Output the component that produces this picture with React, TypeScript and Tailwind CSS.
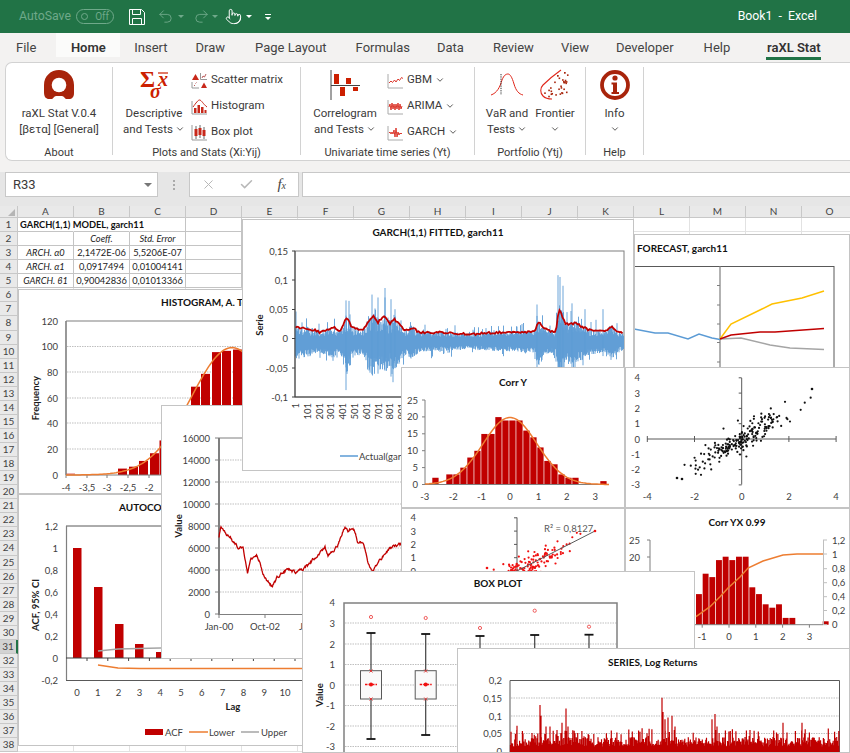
import { ChevronDown, Pointer, Redo2, Undo2, Check, X } from "lucide-react";
import type { ReactNode } from "react";

// seeded so the noisy chart data stays the same on every load
function makeRng(seed: number) {
  let a = seed;
  return () => {
    a = (a + 0x6d2b79f5) | 0;
    let t = Math.imul(a ^ (a >>> 15), 1 | a);
    t = (t + Math.imul(t ^ (t >>> 7), 61 | t)) ^ t;
    return ((t ^ (t >>> 14)) >>> 0) / 4294967296;
  };
}

function gauss(r: () => number) {
  return Math.sqrt(-2 * Math.log(r() + 1e-9)) * Math.cos(2 * Math.PI * r());
}

function interp(knots: number[][], x: number) {
  for (let i = 1; i < knots.length; i++) {
    if (x <= knots[i][0]) {
      const [x0, y0] = knots[i - 1];
      const [x1, y1] = knots[i];
      return y0 + ((y1 - y0) * (x - x0)) / (x1 - x0);
    }
  }
  return knots[knots.length - 1][1];
}

const pts = (list: number[][]) => list.map((p) => p.join(",")).join(" ");

const volKnots = [
  [295, 0.02], [300, 0.018], [310, 0.016], [320, 0.011], [333, 0.02], [340, 0.011], [347, 0.037], [352, 0.018],
  [362, 0.013], [373, 0.04], [378, 0.028], [385, 0.038], [390, 0.025], [394, 0.034], [405, 0.014], [412, 0.019],
  [420, 0.01], [440, 0.01], [470, 0.007], [490, 0.01], [510, 0.01], [535, 0.012], [538, 0.03], [543, 0.018],
  [550, 0.012], [556, 0.012], [559, 0.05], [566, 0.024], [575, 0.026], [590, 0.014], [605, 0.011], [611, 0.02],
  [620, 0.01], [624, 0.007],
];

function garchPaths() {
  const r = makeRng(11);
  const zero = 338.5;
  const scale = 586;
  let blue = "";
  const red: number[][] = [];
  for (let x = 295.5; x < 624; x += 0.5) {
    const v = interp(volKnots, x);
    const up = v * (0.3 + r() * 0.9) + (r() > 0.9 ? v * r() * 1.6 : 0);
    const down = 0.007 + v * (0.7 + r() * 0.8) + (r() > 0.88 ? v * r() * 1.3 : 0);
    blue += `M${x} ${(zero - up * scale).toFixed(1)}V${(zero + down * scale).toFixed(1)}`;
    if (x % 1.5 === 0) red.push([x, +(zero - v * scale + (r() - 0.5) * 2.4).toFixed(1)]);
  }
  const spikes = [
    [296, 0.046, -0.02], [346, 0.065, -0.088], [372, 0.075, -0.06], [378, 0.07, -0.06], [385, 0.07, -0.055], [391, 0.067, -0.065],
    [395, 0.05, -0.05], [537, 0.058, -0.06], [558, 0.108, -0.06], [560, 0.105, -0.06], [563, 0.09, -0.05], [572, 0.06, -0.05],
    [585, 0.05, -0.03], [603, 0.05, -0.03],
  ];
  for (const [x, a, b] of spikes) blue += `M${x} ${zero - a * scale}V${zero - b * scale}`;
  return { blue, red: pts(red) };
}

function valuePath() {
  const r = makeRng(3);
  const knots = [
    [219, 537], [221, 527], [224, 532], [230, 537], [238, 548], [243, 547], [247.5, 572], [250, 560], [257, 555], [263, 572],
    [267, 580], [272, 587], [277, 578], [287, 569], [297, 573], [307, 566], [313, 560], [325, 547], [328, 555], [337, 547],
    [345, 526], [348, 532], [353, 526], [358, 543], [363, 543], [368, 563], [373, 570], [380, 560], [390, 548], [400, 545], [410, 540],
  ];
  const out: number[][] = [];
  let drift = 0;
  for (let x = 219; x < 410; x += 0.5) {
    drift = drift * 0.6 + (r() - 0.5) * 2.4;
    out.push([+x.toFixed(1), +(interp(knots, x) + drift).toFixed(1)]);
  }
  return pts(out);
}

function scatter(seed: number, ox: number, oy: number, ux: number, uy: number) {
  const r = makeRng(seed);
  const out: number[][] = [];
  for (let i = 0; i < 210; i++) {
    const x = gauss(r) * 0.95 + 0.05;
    const y = 0.9 * x + gauss(r) * 0.42;
    out.push([ox + x * ux, oy - y * uy]);
  }
  return out;
}

function logReturnsPath() {
  const r = makeRng(29);
  const zero = 751.5;
  const scale = 358;
  let d = "";
  for (let x = 510.5; x < 839; x += 0.7) {
    const v = r() > 0.85 ? 0.035 + r() * 0.03 : 0.014 + r() * 0.026;
    d += `M${x.toFixed(1)} ${zero + 3}V${(zero - v * scale).toFixed(1)}`;
  }
  const spikes = [
    [511, 0.055], [517, 0.072], [523, 0.05], [532, 0.052], [540, 0.13], [541, 0.1], [546, 0.07], [550, 0.07], [557, 0.06], [562, 0.08],
    [566, 0.12], [568, 0.07], [575, 0.05], [662, 0.15], [663, 0.11], [665, 0.09], [668, 0.095], [672, 0.1], [675, 0.07], [712, 0.09],
    [715, 0.105], [717, 0.07], [783, 0.08], [802, 0.08], [750, 0.06], [640, 0.055],
  ];
  for (const [x, v] of spikes) d += `M${x} ${zero + 3}V${zero - v * scale}`;
  return d;
}

const garch = garchPaths();
const valueLine = valuePath();
const blackDots = scatter(7, 741.7, 439, 23.6, 15.3);
const redDots = scatter(19, 517, 571, 26, 13.3);
const logReturns = logReturnsPath();
const frontierDots = (() => {
  const r = makeRng(5);
  const out: number[][] = [];
  for (let i = 0; i < 42; i++) {
    const x = 545 + r() * 24;
    const y = 74 + r() * 25;
    if (y > 96 - (x - 545) * 0.05 || y < 92 - (x - 545) * 1.1) continue;
    out.push([x, y]);
  }
  return out;
})();

function normal(cx: number, sigma: number, zero: number, peak: number, from: number, to: number) {
  const out: number[][] = [];
  for (let x = from; x <= to; x += 2) {
    out.push([x, +(zero - peak * Math.exp(-((x - cx) ** 2) / (2 * sigma * sigma))).toFixed(1)]);
  }
  return pts(out);
}

function T({ x, y, a = "middle", b, children, rot }: { x: number; y: number; a?: "start" | "middle" | "end"; b?: boolean; rot?: boolean; children: ReactNode }) {
  return (
    <text
      x={x}
      y={y}
      textAnchor={a}
      transform={rot ? `rotate(-90 ${x} ${y})` : undefined}
      className={b ? "fill-[#1c1c1c] text-[9.5px] font-bold" : "fill-[#404040] text-[9.5px]"}
    >
      {children}
    </text>
  );
}

function Title({ x, y, a, children }: { x: number; y: number; a?: "start" | "middle"; children: ReactNode }) {
  return (
    <text x={x} y={y} textAnchor={a ?? "middle"} className="fill-[#111] text-[10px] font-bold">
      {children}
    </text>
  );
}

function Dash({ x1, x2, y }: { x1: number; x2: number; y: number }) {
  return <line x1={x1} x2={x2} y1={y} y2={y} stroke="#bfbfbf" strokeWidth="1" strokeDasharray="1.5 1" />;
}

function Chart({ x, y, w, h, className, children }: { x: number; y: number; w: number; h: number; className: string; children: ReactNode }) {
  return (
    <div className={`absolute overflow-hidden bg-white outline-1 -outline-offset-1 outline-[#c4c4c4] ${className}`}>
      <svg width={w} height={h} viewBox={`${x} ${y} ${w} ${h}`} className="block font-['Lato',sans-serif]">
        {children}
      </svg>
    </div>
  );
}

function HistogramChart() {
  const bars = [
    [66, 1.3], [118, 5], [129, 6.5], [139, 11], [150, 17], [159.5, 27], [170, 34], [181, 50], [191, 69], [201, 79], [212, 96], [222, 97], [233, 98],
  ];
  const ys = [[120, 321], [100, 346.5], [80, 372], [60, 398], [40, 423], [20, 449], [0, 475]];
  const xs = [[66, "-4"], [87, "-3,5"], [107, "-3"], [128, "-2,5"], [149, "-2"]];
  return (
    <Chart x={18} y={289} w={402} h={205} className="left-[18px] top-[83px] w-[402px] h-[205px]">
      <Title x={161} y={306} a="start">HISTOGRAM, A. Test</Title>
      {ys.slice(1, 6).map(([, y]) => <Dash key={y} x1={67} x2={420} y={y} />)}
      <line x1={66} x2={420} y1={321} y2={321} stroke="#7f7f7f" strokeWidth="1.2" />
      {bars.map(([x, v]) => (
        <rect key={x} x={x} y={475 - v * 1.28} width={9} height={v * 1.28} fill={x === 66 ? "#e98a8a" : "#c00000"} />
      ))}
      <line x1={66} x2={66} y1={321} y2={475} stroke="#7f7f7f" strokeWidth="1.6" />
      <line x1={66} x2={420} y1={475} y2={475} stroke="#7f7f7f" />
      {xs.map(([x]) => <line key={x} x1={x} x2={x} y1={475} y2={478} stroke="#7f7f7f" />)}
      <polyline points={normal(232, 41, 475, 99.5 * 1.28, 66, 250)} fill="none" stroke="#ed7d31" strokeWidth="1.5" />
      {ys.map(([v, y]) => <T key={v} x={58} y={y + 3.5} a="end">{v}</T>)}
      {xs.map(([x, l]) => <T key={x} x={x as number} y={491}>{l}</T>)}
      <T x={39} y={398} b rot>Frequency</T>
    </Chart>
  );
}

function AcfChart() {
  const labels = [0, 1, 2, 3, 4, 5, 6, 7, 8, 9, 10];
  const ys = [["1,2", 526], ["1", 548], ["0,8", 570], ["0,6", 592], ["0,4", 614], ["0,2", 636], ["0", 658], ["-0,2", 680]];
  const bars = [[73, 548], [94, 587], [115, 624], [135, 644], [156, 652]];
  return (
    <Chart x={18} y={494} w={402} h={252} className="left-[18px] top-[288px] w-[402px] h-[252px]">
      <Title x={119} y={511} a="start">AUTOCORRELOGRAM</Title>
      <line x1={66} x2={420} y1={526} y2={526} stroke="#595959" />
      <line x1={66} x2={420} y1={680.5} y2={680.5} stroke="#595959" />
      {bars.map(([x, y]) => <rect key={x} x={x} y={y} width={8.5} height={658 - y} fill="#c00000" />)}
      <line x1={66.5} x2={66.5} y1={526} y2={680} stroke="#7f7f7f" strokeWidth="1.2" />
      <line x1={66} x2={420} y1={658} y2={658} stroke="#404040" />
      {labels.map((l) => <line key={l} x1={87 + l * 20.8} x2={87 + l * 20.8} y1={658} y2={661} stroke="#404040" />)}
      <polyline points="98,651 118,649 160,648 300,648" fill="none" stroke="#a5a5a5" strokeWidth="1.5" />
      <polyline points="98,665 118,668 140,668.5 310,668.5" fill="none" stroke="#ed7d31" strokeWidth="1.5" />
      {ys.map(([l, y]) => <T key={l} x={58} y={(y as number) + 3.5} a="end">{l}</T>)}
      {labels.map((l) => <T key={l} x={77 + l * 20.8} y={696}>{l}</T>)}
      <T x={233} y={710} b>Lag</T>
      <T x={39} y={605} b rot>ACF, 95% CI</T>
      <rect x={145} y={729} width={18} height={6} fill="#c00000" />
      <T x={165} y={736} a="start">ACF</T>
      <line x1={189} x2={208} y1={732} y2={732} stroke="#ed7d31" strokeWidth="1.5" />
      <T x={209} y={736} a="start">Lower</T>
      <line x1={241} x2={259} y1={732} y2={732} stroke="#a5a5a5" strokeWidth="1.5" />
      <T x={261} y={736} a="start">Upper</T>
    </Chart>
  );
}

function ValueChart() {
  const ys = [[16000, 438], [14000, 460], [12000, 482], [10000, 504], [8000, 526], [6000, 548], [4000, 570], [2000, 592], [0, 614]];
  return (
    <Chart x={161} y={405} w={300} h={254} className="left-[161px] top-[199px] w-[300px] h-[254px]">
      <line x1={219} x2={461} y1={438} y2={438} stroke="#7f7f7f" />
      {ys.slice(1, 8).map(([, y]) => <Dash key={y} x1={220} x2={461} y={y} />)}
      <line x1={219} x2={219} y1={438} y2={615} stroke="#7f7f7f" strokeWidth="2" />
      <line x1={219} x2={461} y1={614.5} y2={614.5} stroke="#7f7f7f" />
      {ys.map(([, y]) => <line key={y} x1={215} x2={219} y1={y} y2={y} stroke="#7f7f7f" />)}
      {[219, 265, 312].map((x) => <line key={x} x1={x} x2={x} y1={614} y2={618} stroke="#7f7f7f" />)}
      <polyline points={valueLine} fill="none" stroke="#c00000" strokeWidth="1.3" />
      {ys.map(([v, y]) => <T key={v} x={210} y={y + 3.5} a="end">{v}</T>)}
      <T x={219} y={630}>Jan-00</T>
      <T x={265} y={630}>Oct-02</T>
      <T x={312} y={630}>Jul-05</T>
      <T x={182} y={526} b rot>Value</T>
    </Chart>
  );
}

function GarchChart() {
  const ys = [["0,15", 251], ["0,1", 280], ["0,05", 309.5], ["0", 338.5], ["-0,05", 368], ["-0,1", 397]];
  const xs = ["1", "101", "201", "301", "401", "501", "601", "701", "801", "901"];
  return (
    <Chart x={242} y={219} w={392} h={252} className="left-[242px] top-[13px] w-[392px] h-[252px]">
      <Title x={438} y={236}>GARCH(1,1) FITTED, garch11</Title>
      <rect x={295} y={251} width={329} height={146} fill="none" stroke="#7f7f7f" strokeWidth="1" />
      <path d={garch.blue} stroke="#5b9bd5" strokeWidth="0.9" fill="none" />
      <polyline points={garch.red} fill="none" stroke="#c00000" strokeWidth="1.8" />
      <line x1={295} x2={295} y1={251} y2={397} stroke="#404040" />
      <line x1={295} x2={624} y1={397} y2={397} stroke="#404040" />
      {ys.map(([l, y]) => (
        <g key={l}>
          <line x1={292} x2={295} y1={y} y2={y} stroke="#404040" />
          <T x={288} y={(y as number) + 3.5} a="end">{l}</T>
        </g>
      ))}
      {xs.map((l, i) => {
        const x = 295.5 + i * 11.8;
        return (
          <text key={l} x={x + 3.5} y={403} textAnchor="end" transform={`rotate(-90 ${x + 3.5} 403)`} className="fill-[#404040] text-[9.5px]">
            {l}
          </text>
        );
      })}
      <T x={263} y={325} b rot>Serie</T>
      <line x1={340} x2={358} y1={456} y2={456} stroke="#5b9bd5" strokeWidth="1.5" />
      <T x={359} y={459.5} a="start">Actual(garch11)</T>
    </Chart>
  );
}

function ForecastChart() {
  return (
    <Chart x={634} y={234} w={216} h={134} className="left-[634px] top-[28px] w-[216px] h-[134px]">
      <Title x={637} y={251.5} a="start">FORECAST, garch11</Title>
      <line x1={634} x2={834} y1={266.5} y2={266.5} stroke="#595959" />
      <line x1={834} x2={834} y1={266} y2={368} stroke="#595959" />
      <line x1={634.5} x2={634.5} y1={266} y2={368} stroke="#7f7f7f" />
      <line x1={720} x2={720} y1={266} y2={368} stroke="#7f7f7f" strokeWidth="1.2" />
      {[285.5, 305, 324, 342.5, 362].map((y) => <line key={y} x1={717} x2={720} y1={y} y2={y} stroke="#7f7f7f" />)}
      <polyline points="634,329 655,333 668,333 688,339 699,334 712,338 720,339.5" fill="none" stroke="#5b9bd5" strokeWidth="1.5" />
      <polyline points="720,339 741,338 770,345 790,348 824,349.5" fill="none" stroke="#a5a5a5" strokeWidth="1.5" />
      <polyline points="720,339 731,324 762,309 772,304 802,298 824,291" fill="none" stroke="#ffc000" strokeWidth="1.5" />
      <polyline points="720,339 731,335 760,332 775,332 824,328.5" fill="none" stroke="#c00000" strokeWidth="1.5" />
    </Chart>
  );
}

function CorrYChart() {
  const counts = [2, 0, 3, 3, 5, 8, 10, 15, 15, 20, 19, 19, 19, 16, 14, 11, 7, 6, 3, 2, 2, 0, 0, 0, 1];
  const ys = [25, 20, 15, 10, 5, 0];
  const xs = [-3, -2, -1, 0, 1, 2, 3];
  return (
    <Chart x={401} y={367} w={224} h={141} className="left-[401px] top-[161px] w-[224px] h-[141px]">
      <Title x={513} y={385.5}>Corr Y</Title>
      {counts.map((c, i) => c > 0 && (
        <rect key={i} x={432.3 + i * 7} y={484.5 - c * 3.37} width={6.3} height={c * 3.37} fill="#c00000" />
      ))}
      <line x1={425} x2={425} y1={400} y2={485} stroke="#7f7f7f" />
      <line x1={425} x2={609} y1={484.5} y2={484.5} stroke="#7f7f7f" />
      {ys.map((v, i) => (
        <g key={v}>
          <line x1={422} x2={425} y1={400 + i * 16.9} y2={400 + i * 16.9} stroke="#7f7f7f" />
          <T x={418} y={403.5 + i * 16.9} a="end">{v}</T>
        </g>
      ))}
      {xs.map((v) => <T key={v} x={510 + v * 28.4} y={500}>{v}</T>)}
      <polyline points={normal(510, 27, 484.5, 67, 425, 609)} fill="none" stroke="#ed7d31" strokeWidth="1.5" />
    </Chart>
  );
}

function ScatterChart() {
  const ys = [4, 3, 2, 1, 0, -1, -2, -3];
  const xs = [-4, -2, 0, 2, 4];
  return (
    <Chart x={625} y={367} w={225} h={141} className="left-[625px] top-[161px] w-[225px] h-[141px]">
      <line x1={741.7} x2={741.7} y1={378} y2={484.5} stroke="#595959" />
      <line x1={647} x2={836} y1={439} y2={439} stroke="#595959" />
      {ys.map((v) => (
        <g key={v}>
          <line x1={738.7} x2={741.7} y1={439 - v * 15.3} y2={439 - v * 15.3} stroke="#595959" />
          <T x={640} y={442.5 - v * 15.3} a="end">{v}</T>
        </g>
      ))}
      {xs.map((v) => (
        <g key={v}>
          <line x1={741.7 + v * 23.6} x2={741.7 + v * 23.6} y1={436} y2={442} stroke="#595959" />
          <T x={741.7 + v * 23.6} y={500}>{v}</T>
        </g>
      ))}
      {blackDots.map(([x, y], i) => <circle key={i} cx={x} cy={y} r="1.1" fill="#111" />)}
      <circle cx={812} cy={389} r="1.3" fill="#111" />
      <circle cx={677} cy={478} r="1.3" fill="#111" />
      <circle cx={682} cy={479} r="1.3" fill="#111" />
    </Chart>
  );
}

function RedScatterChart() {
  return (
    <Chart x={401} y={508} w={224} h={100} className="left-[401px] top-[302px] w-[224px] h-[100px]">
      <line x1={517} x2={517} y1={517.5} y2={600} stroke="#595959" />
      {[0, 1, 2, 3, 4].map((v) => (
        <g key={v}>
          <line x1={514} x2={517} y1={571 - v * 13.3} y2={571 - v * 13.3} stroke="#595959" />
          <T x={416} y={574.5 - v * 13.3} a="end">{v}</T>
        </g>
      ))}
      {redDots.map(([x, y], i) => <circle key={i} cx={x} cy={y} r="1.1" fill="#f01010" />)}
      <line x1={470} x2={595} y1={595} y2={531} stroke="#595959" />
      <circle cx={595} cy={531} r="1.3" fill="#f01010" />
      <circle cx={487} cy={568} r="1.3" fill="#f01010" />
      <text x={544} y={532} className="fill-[#595959] text-[9.5px]">
        R² = 0,8127
      </text>
    </Chart>
  );
}

function CorrYXChart() {
  const counts = [9, 15, 14, 19, 20, 19, 20, 20, 11, 9, 6, 5, 6, 2, 2, 0, 0, 0, 0, 1];
  const right = [["1,2", 540], ["1", 554], ["0,8", 568.7], ["0,6", 582.7], ["0,4", 596.7], ["0,2", 610.5], ["0", 624.7]];
  const xs = [-1, 0, 1, 2, 3];
  return (
    <Chart x={625} y={508} w={225} h={142} className="left-[625px] top-[302px] w-[225px] h-[142px]">
      <Title x={737} y={526}>Corr YX 0.99</Title>
      <line x1={650} x2={650} y1={540} y2={625} stroke="#7f7f7f" />
      {[[25, 540], [20, 557]].map(([v, y]) => (
        <g key={v}>
          <line x1={647} x2={650} y1={y} y2={y} stroke="#7f7f7f" />
          <T x={640} y={y + 3.5} a="end">{v}</T>
        </g>
      ))}
      {counts.map((c, i) => c > 0 && (
        <rect key={i} x={696 + i * 6.67} y={624.7 - c * 3.4} width={5.9} height={c * 3.4} fill="#c00000" />
      ))}
      <line x1={650} x2={823} y1={624.7} y2={624.7} stroke="#7f7f7f" />
      {xs.map((v) => (
        <g key={v}>
          <line x1={729 + v * 26.8} x2={729 + v * 26.8} y1={624.7} y2={627.7} stroke="#7f7f7f" />
          <T x={702 + (v + 1) * 26.9} y={640}>{v}</T>
        </g>
      ))}
      <line x1={823.5} x2={823.5} y1={540} y2={625} stroke="#bfbfbf" />
      {right.map(([l, y]) => (
        <g key={l}>
          <line x1={823} x2={827} y1={y} y2={y} stroke="#bfbfbf" />
          <T x={832} y={(y as number) + 3.5} a="start">{l}</T>
        </g>
      ))}
      <polyline points="696,616.7 710,606.7 720,596.7 728,588 740,577 748,568 763,561 783,555 797,554 823,554" fill="none" stroke="#ed7d31" strokeWidth="1.5" />
    </Chart>
  );
}

function BoxChart() {
  const ys = [[4, 602.7], [3, 623], [2, 644], [1, 664.5], [0, 685], [-1, 705.5], [-2, 726], [-3, 746.5]];
  const boxes = [
    [371, 617, 633, 739],
    [425.7, 618, 634, 735],
    [480, 628, 636, 739],
    [534.7, 610.7, 635, 739],
    [589, 626.7, 634.7, 739],
  ];
  return (
    <Chart x={302} y={571} w={393} h={182} className="left-[302px] top-[365px] w-[393px] h-[182px]">
      <Title x={498} y={587}>BOX PLOT</Title>
      {ys.slice(1).map(([, y]) => <Dash key={y} x1={345} x2={617} y={y} />)}
      <path d="M344 753V603H617V753" fill="none" stroke="#808080" strokeWidth="1.5" />
      {boxes.map(([x, o, top, bottom]) => (
        <g key={x}>
          <line x1={x} x2={x} y1={top} y2={bottom} stroke="#404040" strokeWidth="1.2" />
          <line x1={x - 4.5} x2={x + 4.5} y1={top} y2={top} stroke="#111" strokeWidth="1.8" />
          <line x1={x - 4.5} x2={x + 4.5} y1={bottom} y2={bottom} stroke="#111" strokeWidth="1.8" />
          <rect x={x - 10.5} y={670.7} width={21} height={28.3} fill="#fafafa" stroke="#595959" />
          <line x1={x - 6} x2={x + 6} y1={684.5} y2={684.5} stroke="#f01010" strokeWidth="1.4" strokeDasharray="2.5 1" />
          <circle cx={x} cy={684.5} r="2" fill="#f01010" />
          <circle cx={x} cy={o} r="1.6" fill="none" stroke="#f05a5a" />
          <path d={`M${x - 1.5} 669.5l3 3m0 -3l-3 3M${x - 1.5} 697.5l3 3m0 -3l-3 3`} stroke="#e03030" strokeWidth="0.9" />
        </g>
      ))}
      {ys.map(([v, y]) => <T key={v} x={335} y={y + 3.5} a="end">{v}</T>)}
      <T x={323} y={695} b rot>Value</T>
    </Chart>
  );
}

function ReturnsChart() {
  const ys = [["0,2", 680], ["0,15", 698], ["0,1", 716], ["0,05", 733.5], ["0", 751.5]];
  return (
    <Chart x={457} y={648} w={393} h={105} className="left-[457px] top-[442px] w-[393px] h-[105px]">
      <Title x={608} y={665.5} a="start">SERIES, Log Returns</Title>
      {ys.slice(1, 4).map(([l, y]) => <Dash key={l} x1={511} x2={839} y={y as number} />)}
      <path d="M510 753V680.5H839.5V753" fill="none" stroke="#595959" strokeWidth="1" />
      <path d={logReturns} stroke="#c00000" strokeWidth="1.2" fill="none" />
      {ys.map(([l, y]) => <T key={l} x={502} y={(y as number) + 3.5} a="end">{l}</T>)}
    </Chart>
  );
}

function LogoIcon() {
  return (
    <svg width="32" height="30" viewBox="44 70 32 30">
      <path
        d="M45 92V85C45 76 52 70 60 70C68 70 75 76 75 85V93C75 97 73 99 70 99H67C66 99 65 96 63 96H57C55 96 54 99 53 99H50C47 99 45 97 45 92Z"
        fill="#a8240b"
      />
      <circle cx="60" cy="85" r="7.3" fill="#fff" />
    </svg>
  );
}

function SigmaIcon() {
  return (
    <svg width="32" height="32" viewBox="137 69 32 32" className="overflow-visible font-['Liberation_Serif',serif]">
      <text x="139" y="87" className="fill-[#cc1f00] text-[23px] font-bold">Σ</text>
      <line x1="157" x2="167" y1="73" y2="73" stroke="#cc1f00" strokeWidth="1.2" />
      <text x="157" y="86" className="fill-[#cc1f00] text-[20px] italic font-bold">x</text>
      <text x="149" y="98" className="fill-[#cc1f00] text-[20px] italic font-bold">σ</text>
    </svg>
  );
}

function CorrelogramIcon() {
  return (
    <svg width="32" height="32" viewBox="329 69 32 32">
      <rect x="334" y="74" width="5" height="10" fill="#cc1f00" />
      <rect x="346" y="78" width="5" height="6" fill="#cc1f00" />
      <rect x="340" y="87" width="5" height="9" fill="#cc1f00" />
      <rect x="353" y="87" width="5" height="4" fill="#cc1f00" />
      <path d="M331 70V100M331 85.5H360" stroke="#444" fill="none" />
    </svg>
  );
}

function SmallIcon({ kind }: { kind: string }) {
  if (kind === "scatter") {
    return (
      <svg width="17" height="17" viewBox="0 0 17 17" className="shrink-0">
        <path d="M1 8L4.5 2L8 8Z" fill="#c8281a" />
        <path d="M9.5 1V7.5H16" stroke="#999" fill="none" />
        <path d="M11 6l1 -2l1.5 1l1.5 -3" stroke="#a33" fill="none" strokeWidth="0.8" />
        <path d="M1 10V16H8" stroke="#999" fill="none" />
        <path d="M3 14l1 -1m0.5 -1.5l1 -1" stroke="#a33" strokeWidth="0.8" />
        <path d="M10 16L13 10.5L16 16Z" fill="#c8281a" />
      </svg>
    );
  }
  if (kind === "hist") {
    return (
      <svg width="17" height="17" viewBox="0 0 17 17" className="shrink-0">
        <path d="M1 16V3M1 16H16" stroke="#999" fill="none" />
        <path d="M3 15h2.5v-5H3zM6.5 15h2.5v-8H6.5zM10 15h2.5v-6H10zM13.5 15h2v-3h-2z" fill="#c8281a" />
        <path d="M2 9C5 5 7 2 8.5 2C10.5 2 12 6 16 9" stroke="#c8281a" fill="none" />
      </svg>
    );
  }
  if (kind === "box") {
    return (
      <svg width="17" height="17" viewBox="0 0 17 17" className="shrink-0">
        <path d="M1 1V16H16" stroke="#999" fill="none" />
        <path d="M5 2V15M9 1V14M13 3V15" stroke="#666" />
        <rect x="3.5" y="5" width="3" height="7" fill="#c8281a" />
        <rect x="7.5" y="4" width="3" height="7" fill="#c8281a" />
        <rect x="11.5" y="6" width="3" height="6" fill="#c8281a" />
      </svg>
    );
  }
  const line =
    kind === "gbm"
      ? "M2 11l2 -2l1.5 1.5l2 -2.5l1.5 2l2 -3l1.5 1.5l2 -3l1.5 1"
      : kind === "arima"
        ? "M2 9l1 -3l1 6l1 -7l1 6l1 -5l1 6l1 -6l1 5l1 -6l1 7l1 -6l1 5l1 -3"
        : "M2 9l1 -1l1 2l1 -2l1 2l1 -4l1 7l1 -9l1 9l1 -5l1 3l1 -2l1 1l1 -1";
  return (
    <svg width="17" height="17" viewBox="0 0 17 17" className="shrink-0">
      <path d="M1 2V16H16" stroke="#aaa" fill="none" />
      <path d={line} stroke="#d8261a" fill="none" strokeWidth="0.9" />
    </svg>
  );
}

function VarIcon() {
  return (
    <svg width="34" height="24" viewBox="489 73 34 24">
      <path d="M490 95C496 93 499 87 501 80C503 75 505 74 507 74C509 74 511 77 513 84C515 91 518 94 522 95" fill="none" stroke="#e0261a" />
      <line x1="500" x2="500" y1="74" y2="95" stroke="#333" strokeDasharray="1.3 1" />
    </svg>
  );
}

function FrontierIcon() {
  return (
    <svg width="30" height="32" viewBox="542 69 30 32">
      <path d="M563 70C556 75 549 81 545 85C542 88 542 93 545 96C547 98 550 99 554 99" fill="none" stroke="#e0261a" strokeWidth="1.1" />
      {frontierDots.map(([x, y], i) => <rect key={i} x={x} y={y} width="1.6" height="1.6" fill="#a8240b" />)}
      <rect x="566" y="72" width="1.7" height="1.7" fill="#a8240b" />
      <rect x="559" y="75" width="1.7" height="1.7" fill="#a8240b" />
    </svg>
  );
}

function InfoIcon() {
  return (
    <svg width="30" height="30" viewBox="600 70 30 30">
      <circle cx="615" cy="85" r="13" fill="#fff" stroke="#a8240b" strokeWidth="3.8" />
      <circle cx="615" cy="78" r="2.6" fill="#a8240b" />
      <path d="M611.5 82.5H617V92H619V94H611.5V92H613V84.5H611.5Z" fill="#a8240b" />
    </svg>
  );
}

function Chev({ className }: { className?: string }) {
  return <ChevronDown strokeWidth={2} className={`h-[10px] w-[10px] shrink-0 ${className ?? ""}`} />;
}

function BigButton({ icon, lines, width, chevron = true }: { icon: ReactNode; lines: string[]; width: string; chevron?: boolean }) {
  return (
    <div className={`flex shrink-0 flex-col items-center ${width}`}>
      <div className="flex h-[32px] items-center justify-center">{icon}</div>
      <div className="mt-[4px] whitespace-nowrap leading-[16px]">{lines[0]}</div>
      <div className="flex h-[16px] items-center gap-[2px] whitespace-nowrap leading-[16px]">
        {lines[1]}
        {chevron && <Chev />}
      </div>
    </div>
  );
}

function SmallButton({ icon, label, chevron }: { icon: ReactNode; label: string; chevron?: boolean }) {
  return (
    <div className="flex h-[26px] shrink-0 items-center gap-[3px] whitespace-nowrap">
      {icon}
      <span>{label}</span>
      {chevron && <Chev />}
    </div>
  );
}

function Group({ label, width, inner, children }: { label: string; width: string; inner: string; children: ReactNode }) {
  return (
    <div className={`relative flex h-[88px] flex-col border-r border-[#d2d2d2] ${width}`}>
      <div className={`flex h-[72px] flex-1 pt-[2px] ${inner}`}>{children}</div>
      <div className="-mb-[6px] text-center text-[11px] leading-[16px]">{label}</div>
    </div>
  );
}

const tabs = [
  { label: "File", cls: "ml-[16px]" },
  { label: "Home", cls: "ml-[20px] bg-[#fbfbfa] px-[14.5px] font-semibold text-[#333]" },
  { label: "Insert", cls: "ml-[14px]" },
  { label: "Draw", cls: "ml-[28px]" },
  { label: "Page Layout", cls: "ml-[30px]" },
  { label: "Formulas", cls: "ml-[29px]" },
  { label: "Data", cls: "ml-[27px]" },
  { label: "Review", cls: "ml-[29px]" },
  { label: "View", cls: "ml-[27px]" },
  { label: "Developer", cls: "ml-[27px]" },
  { label: "Help", cls: "ml-[30px]" },
];

const cols = ["A", "B", "C", "D", "E", "F", "G", "H", "I", "J", "K", "L", "M", "N", "O"];
const rows = Array.from({ length: 38 }, (_, i) => i + 1);

const cells: Record<number, { text: string; italic?: boolean }[]> = {
  2: [{ text: "" }, { text: "Coeff.", italic: true }, { text: "Std. Error", italic: true }],
  3: [{ text: "ARCH. α0", italic: true }, { text: "2,1472E-06" }, { text: "5,5206E-07" }],
  4: [{ text: "ARCH. α1", italic: true }, { text: "0,0917494" }, { text: "0,01004141" }],
  5: [{ text: "GARCH. ϐ1", italic: true }, { text: "0,90042836" }, { text: "0,01013366" }],
};

function SheetRow({ n }: { n: number }) {
  const inTable = n <= 5;
  return (
    <div className="flex h-[14.07px]">
      <div
        className={`flex w-[18px] shrink-0 items-center justify-center border-b border-r border-[#c8c8c8] text-[10px] text-[#444] ${
          n === 31 ? "border-r-2 border-r-[#217346] bg-[#d2d2d2]" : "bg-[#e9e9e9]"
        }`}
      >
        {n}
      </div>
      {cols.map((c, i) => {
        const data = cells[n]?.[i];
        const tableCell = inTable && i < 4;
        const merged = n === 1 && i < 2;
        return (
          <div
            key={c}
            className={`flex w-[56px] shrink-0 items-center justify-center whitespace-nowrap border-b border-r text-[9.3px] text-[#222] ${
              tableCell ? "border-[#c4c4c4]" : "border-[#e2e2e2]"
            } ${merged ? "border-r-transparent" : ""} ${data?.italic ? "italic" : ""}`}
          >
            {n === 1 && i === 0 ? (
              <span className="w-full pl-[2px] font-bold text-[#111]">GARCH(1,1) MODEL, garch11</span>
            ) : (
              data?.text
            )}
          </div>
        );
      })}
    </div>
  );
}

export default function App() {
  return (
    <div className="h-[753px] w-[850px] overflow-hidden bg-[#e6e6e6] font-['Roboto',sans-serif] text-[11.5px] text-[#3b3a39]">
      {/* title bar */}
      <div className="flex h-[33px] items-center bg-[#217346] text-[12.3px] text-white">
        <span className="ml-[19px] w-[50px] whitespace-nowrap text-[#6fa98a]">AutoSave</span>
        <div className="ml-[7px] flex h-[15px] w-[38px] items-center justify-between rounded-full border border-[#6fa98a] px-[4px] text-[10px] text-[#6fa98a]">
          <span className="h-[7px] w-[7px] rounded-full border border-[#6fa98a]" />
          <span>Off</span>
        </div>
        <svg width="16" height="16" viewBox="0 0 16 16" className="ml-[15px]">
          <path d="M.5.5H12.5L15.5 3.5V15.5H.5ZM3.5.5V5.5H11.5V.5M3.5 15.5V9.5H12.5V15.5" fill="none" stroke="#fff" />
        </svg>
        <Undo2 strokeWidth={1.3} className="ml-[12px] h-[17px] w-[17px] text-[#6fa98a]" />
        <span className="ml-[4px] h-0 w-0 border-x-[3px] border-t-[3px] border-x-transparent border-t-[#6fa98a]" />
        <Redo2 strokeWidth={1.3} className="ml-[9px] h-[17px] w-[17px] text-[#6fa98a]" />
        <span className="ml-[2px] h-0 w-0 border-x-[3px] border-t-[3px] border-x-transparent border-t-[#6fa98a]" />
        <Pointer strokeWidth={1.4} className="ml-[7px] h-[17px] w-[17px]" />
        <span className="ml-[4px] h-0 w-0 border-x-[3px] border-t-[3px] border-x-transparent border-t-white" />
        <div className="ml-[13px] flex flex-col items-center gap-[2px]">
          <span className="h-[1px] w-[6px] bg-white" />
          <span className="h-0 w-0 border-x-[3px] border-t-[3px] border-x-transparent border-t-white" />
        </div>
        <span className="ml-auto mr-[33px] whitespace-pre">Book1  -  Excel</span>
      </div>

      {/* tabs */}
      <div className="flex h-[29px] items-start bg-[#f3f2f1] text-[13px] text-[#444]">
        {tabs.map((t) => (
          <div key={t.label} className={`flex h-[24px] items-center whitespace-nowrap pt-[6px] ${t.cls}`}>
            {t.label}
          </div>
        ))}
        <div className="ml-[36px] flex h-[27px] flex-col items-center font-semibold text-[#333]">
          <div className="flex h-[24px] items-center whitespace-nowrap pt-[6px]">raXL Stat</div>
          <div className="h-[3px] w-[55px] bg-[#217346]" />
        </div>
      </div>

      {/* ribbon */}
      <div className="bg-[#f3f2f1] pb-[11px] pl-[5px]">
        <div className="flex h-[99px] rounded-l-[7px] border-y border-l border-[#d2d2d2] bg-white pt-[4px]">
          <Group label="About" width="w-[107px]" inner="justify-center">
            <BigButton icon={<LogoIcon />} lines={["raXL Stat V.0.4", "[βετα] [General]"]} width="w-[100px]" chevron={false} />
          </Group>
          <Group label="Plots and Stats (Xi:Yij)" width="w-[188px]" inner="pl-[8px]">
            <BigButton icon={<SigmaIcon />} lines={["Descriptive", "and Tests"]} width="w-[66px]" />
            <div className="-mt-[2px] ml-[4px] flex flex-col">
              <SmallButton icon={<SmallIcon kind="scatter" />} label="Scatter matrix" />
              <SmallButton icon={<SmallIcon kind="hist" />} label="Histogram" />
              <SmallButton icon={<SmallIcon kind="box" />} label="Box plot" />
            </div>
          </Group>
          <Group label="Univariate time series (Yt)" width="w-[174px]" inner="pl-[8px]">
            <BigButton icon={<CorrelogramIcon />} lines={["Correlogram", "and Tests"]} width="w-[72px]" />
            <div className="-mt-[2px] ml-[6px] flex flex-col">
              <SmallButton icon={<SmallIcon kind="gbm" />} label="GBM" chevron />
              <SmallButton icon={<SmallIcon kind="arima" />} label="ARIMA" chevron />
              <SmallButton icon={<SmallIcon kind="garch" />} label="GARCH" chevron />
            </div>
          </Group>
          <Group label="Portfolio (Ytj)" width="w-[111px]" inner="justify-center">
            <BigButton icon={<VarIcon />} lines={["VaR and", "Tests"]} width="w-[50px]" />
            <BigButton icon={<FrontierIcon />} lines={["Frontier", ""]} width="w-[46px]" />
          </Group>
          <Group label="Help" width="w-[58px]" inner="justify-center">
            <BigButton icon={<InfoIcon />} lines={["Info", ""]} width="w-[40px]" />
          </Group>
        </div>
      </div>

      {/* formula bar */}
      <div className="flex h-[25px] items-stretch pl-[5px] text-[13px]">
        <div className="flex w-[153px] items-center justify-between border border-[#c8c8c8] bg-white pl-[7px] pr-[5px]">
          <span>R33</span>
          <span className="h-0 w-0 border-x-[4px] border-t-[4px] border-x-transparent border-t-[#777]" />
        </div>
        <div className="flex w-[31px] flex-col items-center justify-center gap-[2px]">
          <span className="h-[2px] w-[2px] bg-[#aaa]" />
          <span className="h-[2px] w-[2px] bg-[#aaa]" />
          <span className="h-[2px] w-[2px] bg-[#aaa]" />
        </div>
        <div className="flex w-[110px] items-center justify-between border border-[#c8c8c8] bg-white pl-[11px] pr-[12px]">
          <X strokeWidth={1.6} className="h-[15px] w-[15px] text-[#b8b8b8]" />
          <Check strokeWidth={2.4} className="h-[15px] w-[15px] text-[#b8b8b8]" />
          <span className="font-['Liberation_Serif',serif] text-[15px] italic text-[#444]">
            f<span className="text-[10px]">x</span>
          </span>
        </div>
        <div className="ml-[3px] flex-1 border-y border-l border-[#c8c8c8] bg-white" />
      </div>

      {/* sheet */}
      <div className="relative mt-[9px] h-[547px] overflow-hidden bg-white font-['Lato',sans-serif]">
        <div className="flex h-[12px]">
          <div className="relative w-[18px] shrink-0 border-b border-r border-[#c8c8c8] bg-[#e9e9e9]">
            <span className="absolute bottom-[1px] right-[2px] h-0 w-0 border-b-[7px] border-l-[7px] border-b-[#b5b5b5] border-l-transparent" />
          </div>
          {cols.map((c) => (
            <div key={c} className="flex w-[56px] shrink-0 items-center justify-center border-b border-r border-[#c8c8c8] bg-[#e9e9e9] text-[10px] text-[#444]">
              {c}
            </div>
          ))}
        </div>
        {rows.map((n) => <SheetRow key={n} n={n} />)}

        <HistogramChart />
        <AcfChart />
        <ValueChart />
        <GarchChart />
        <ForecastChart />
        <CorrYChart />
        <ScatterChart />
        <RedScatterChart />
        <CorrYXChart />
        <BoxChart />
        <ReturnsChart />
      </div>
    </div>
  );
}
